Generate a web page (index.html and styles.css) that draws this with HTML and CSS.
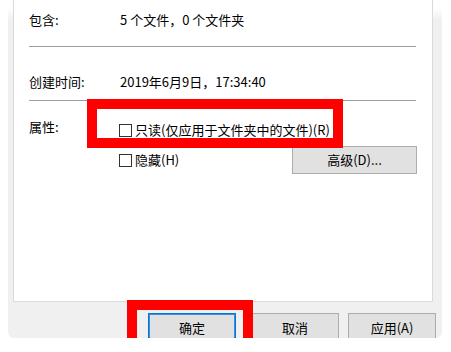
FILE: index.html
```html
<!DOCTYPE html>
<html lang="zh-CN">
<head>
<meta charset="utf-8">
<title>属性</title>
<link rel="stylesheet" href="styles.css">
</head>
<body>
<div class="shot">
  <div class="frame">
    <div class="panel">
      <div class="row row-first"><span class="label">包含:</span><span class="value">5 个文件，0 个文件夹</span></div>
      <hr class="sep sep-first">
      <div class="row row-second"><span class="label">创建时间:</span><span class="value">2019年6月9日，17:34:40</span></div>
      <hr class="sep sep-second">
      <div class="attrs">
        <div class="label attrs-label">属性:</div>
        <div class="options">
          <label class="check"><span class="box"></span>只读(仅应用于文件夹中的文件)(R)</label>
          <div class="option-row">
            <label class="check"><span class="box"></span>隐藏(H)</label>
            <button class="btn btn-adv">高级(D)...</button>
          </div>
        </div>
      </div>
    </div>
    <div class="actions">
      <button class="btn btn-default">确定</button>
      <button class="btn">取消</button>
      <button class="btn">应用(A)</button>
    </div>
  </div>
  <div class="mark mark-readonly"></div>
  <div class="mark mark-ok"></div>
</div>
</body>
</html>
```
FILE: styles.css
```css
html, body {
  margin: 0;
  background: #fff;
}
body {
  height: 352px;
  font-family: "Noto Sans CJK SC", "Noto Sans", sans-serif;
  font-size: 13px;
  color: #000;
}
.shot {
  position: relative;
  height: 338px;
  overflow: hidden;
}
.frame {
  margin-left: 8px;
  width: 434px;
  height: 338px;
  background: linear-gradient(to bottom, #fff 0, #fff 8px, #f0f0f0 20px);
  border-radius: 0 0 6px 6px;
  overflow: hidden;
  display: flex;
  flex-direction: column;
}
.panel {
  margin-left: 5px;
  width: 420px;
  height: 302px;
  flex: none;
  box-sizing: border-box;
  background: #fff;
  border: 1px solid #dadada;
  border-top: none;
  padding: 0 16px 0 15px;
}
.row {
  display: flex;
  line-height: 16px;
  height: 16px;
}
.label {
  width: 91px;
  flex: none;
  line-height: 16px;
}
.row-first {
  margin-top: 12px;
}
.row-second {
  margin-top: 27px;
}
.sep {
  border: none;
  border-top: 1px solid #a0a0a0;
  height: 0;
  margin: 0;
}
.sep-first {
  margin-top: 18px;
}
.sep-second {
  margin-top: 10px;
}
.attrs {
  display: flex;
}
.attrs-label {
  width: 90px;
  padding-top: 18px;
}
.options {
  flex: 1;
  padding-top: 21px;
  margin-right: -1px;
}
.check {
  display: flex;
  align-items: center;
  gap: 3px;
  line-height: 16px;
  height: 16px;
}
.box {
  width: 13px;
  height: 13px;
  box-sizing: border-box;
  border: 1px solid #333;
  background: #fff;
}
.option-row {
  margin-top: 8px;
  height: 28px;
  display: flex;
  justify-content: space-between;
  align-items: center;
}
.btn {
  font: inherit;
  font-size: 13px;
  color: #000;
  background: #e1e1e1;
  border: 1px solid #adadad;
  padding: 0;
  width: 88px;
  height: 30px;
  box-sizing: border-box;
  line-height: 16px;
}
.btn-adv {
  width: 125px;
  height: 28px;
}
.btn-default {
  border-color: #0078d7;
  box-shadow: inset 0 0 0 1px #3a8edb;
  margin-right: 6px;
}
.actions {
  display: flex;
  justify-content: flex-end;
  gap: 9px;
  padding: 11px 6px 0 0;
}
.mark {
  position: absolute;
  box-sizing: border-box;
  border: 10px solid #ff0000;
}
.mark-readonly {
  left: 87px;
  top: 99px;
  width: 256px;
  height: 49px;
}
.mark-ok {
  left: 127px;
  top: 300px;
  width: 126px;
  height: 60px;
}
```
